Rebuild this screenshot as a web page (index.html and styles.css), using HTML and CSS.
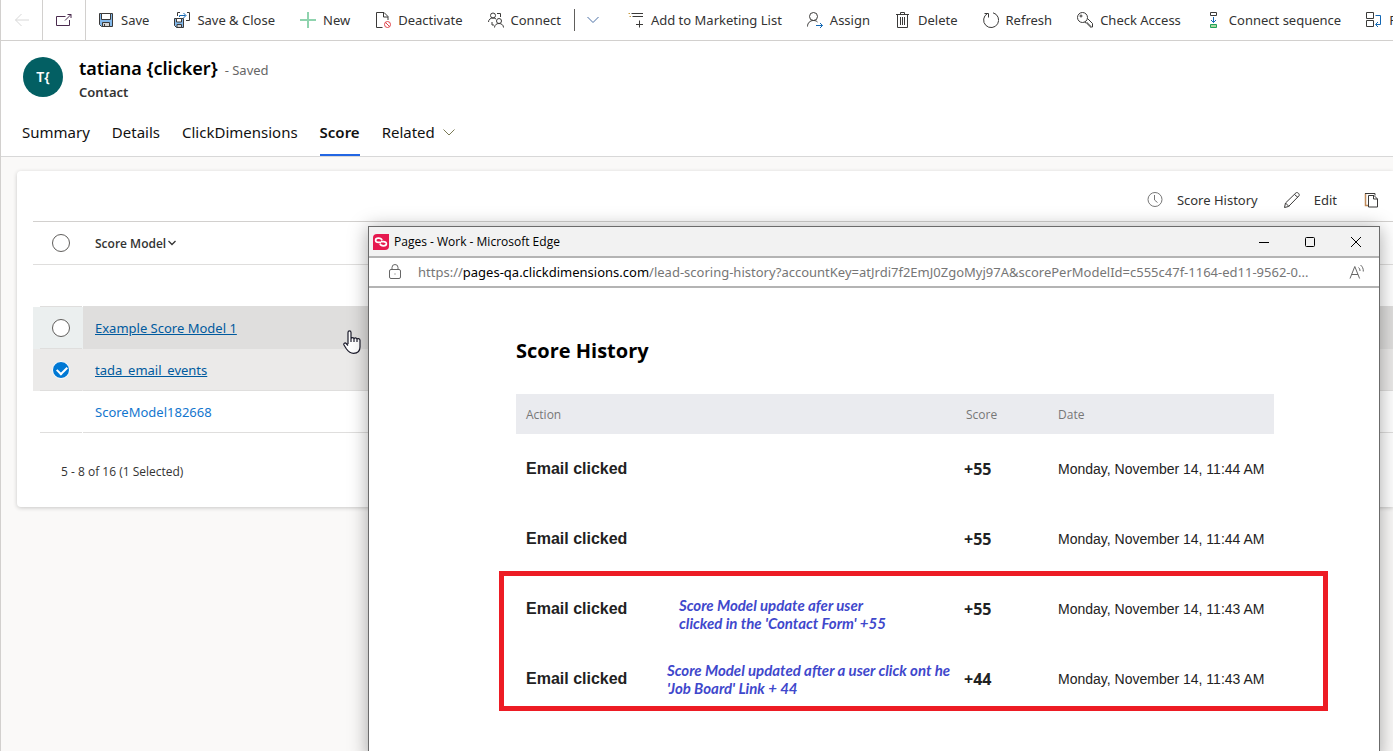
FILE: index.html
```
<!DOCTYPE html>
<html lang="en">
<head>
  <meta charset="UTF-8" />
  <meta name="viewport" content="width=device-width, initial-scale=1.0" />
  <title>Contact: tatiana {clicker}</title>
  <link rel="stylesheet" href="styles.css">
</head>
<body>
  <div class="page">
    <nav class="commands">
      <button class="cmd-square" aria-label="Back">
        <svg class="icon faded" viewBox="0 0 16 16"><path d="M15 8H1.500M7.500 2L1.500 8l6 6"/></svg>
      </button>
      <button class="cmd-square" aria-label="Open in new window">
        <svg class="icon popout" viewBox="0 0 16 16"><path d="M9.500 4.500H.5v9h13V8M9 8.500l6-6M11.500 2.500H15V6"/></svg>
      </button>
      <button class="cmd">
        <svg class="icon" viewBox="0 0 16 16"><path fill="#83b9eb" d="M1.500 1.500h13v13h-11l-2-2z"/><path fill="#fff" d="M3.500 1.500h9v6h-9z"/><path fill="#d5d5d5" d="M4.500 10.500h7v4h-7z"/><path d="M6.500 12v2.500"/></svg>
        Save
      </button>
      <button class="cmd">
        <svg class="icon" viewBox="0 0 16 16"><path fill="#83b9eb" d="M.5 6.500h9v9h-7l-2-2z"/><path fill="#fff" d="M2.500 6.500h5v3.500h-5z"/><path fill="#d5d5d5" d="M3 12.500h4.500v3H3z"/><path d="M3.500 4V.5H6M13 .5h2.500v8H12"/><path stroke="#1267b4" d="M5.500 5V3.500h6M9.500 1l2.500 2.500L9.500 6"/></svg>
        Save &amp; Close
      </button>
      <button class="cmd">
        <svg class="icon" viewBox="0 0 16 16"><path stroke="#8fd3ae" stroke-width="2" d="M8 0v16M0 8h16"/></svg>
        New
      </button>
      <button class="cmd">
        <svg class="icon" viewBox="0 0 16 16"><path d="M7.500 15.500h-6V.5H9l4 4V8M8.500.5v4.500H13"/><g stroke="#e0434b"><circle cx="12.500" cy="12.500" r="3"/><path d="M10.500 10.500l4 4"/></g></svg>
        Deactivate
      </button>
      <button class="cmd">
        <svg class="icon" viewBox="0 0 16 16"><circle cx="5" cy="3.500" r="2.500"/><path d="M.5 10c0-2.500 2-4 4.500-4 1.500 0 2.500.5 3 1M9 1.500h3.500V5"/><circle cx="11" cy="9" r="2.500"/><path d="M6.500 15.500c0-2.500 2-4 4.500-4s4.500 1.500 4.500 4M4 10v3h2"/></svg>
        Connect
      </button>
      <button class="cmd-more" aria-label="More connect options">
        <svg class="icon chevron" viewBox="0 0 16 16"><path d="M2.500 5l5.500 5.500L13.500 5"/></svg>
      </button>
      <button class="cmd">
        <svg class="icon" viewBox="0 0 16 16"><path d="M3.500 1.500H15M4.500 4.500H15M11.500 8.500v7M8 12.500h7"/><path stroke="#c69a3c" d="M.5 1.500H2M1.500 4.500H3"/></svg>
        Add to Marketing List
      </button>
      <button class="cmd">
        <svg class="icon" viewBox="0 0 16 16"><circle cx="6.500" cy="4.500" r="4"/><path d="M.5 14.500c0-3.500 2.500-6 6-6 2 0 3 .5 4 1.500"/><path stroke="#1267b4" d="M9 13.500h6.500M13 11l2.500 2.500L13 16"/></svg>
        Assign
      </button>
      <button class="cmd">
        <svg class="icon" viewBox="0 0 16 16"><path d="M1 2.500h13M5.500 2.500v-2h4v2M2.500 2.500v13h10v-13M5.500 5v8M7.500 5v8M9.500 5v8"/></svg>
        Delete
      </button>
      <button class="cmd">
        <svg class="icon" viewBox="0 0 16 16"><path d="M10 .8A7.500 7.500 0 1 1 4.500 1.500M1.500 1.500h4v4"/></svg>
        Refresh
      </button>
      <button class="cmd">
        <svg class="icon" viewBox="0 0 16 16"><circle cx="5.500" cy="5.500" r="5"/><circle cx="4" cy="4" r="1"/><path d="M10.500 6.500l5 5v3.500H13v-2h-2v-2H9L7.500 10"/></svg>
        Check Access
      </button>
      <button class="cmd">
        <svg class="icon" viewBox="0 0 16 16"><path d="M4.500.5h6v3h-6z"/><path stroke="#1267b4" d="M7.500 5v5.500M5 8l2.500 2.500L10 8"/><path fill="#a5d8a0" stroke="#1fa35a" d="M4.500 12.500h6v3h-6z"/></svg>
        Connect sequence
      </button>
      <button class="cmd">
        <svg class="icon" viewBox="0 0 16 16"><path d="M.5.5h7v6h-7zM.5 8.500h7v6h-7z"/><path stroke="#1267b4" d="M9.500 3.500h5v9H10M12 10l-2.500 2.500L12 15"/></svg>
        P
      </button>
    </nav>

    <header class="record">
      <div class="identity">
        <div class="avatar">T{</div>
        <div>
          <div class="name-line">
            <h1>tatiana {clicker}</h1>
            <span class="saved">- Saved</span>
          </div>
          <div class="entity">Contact</div>
        </div>
      </div>
      <div class="tabs">
        <button class="tab">Summary</button>
        <button class="tab">Details</button>
        <button class="tab">ClickDimensions</button>
        <button class="tab active">Score</button>
        <button class="tab">Related
          <svg class="icon related" viewBox="0 0 16 16"><path d="M2.500 5.500L8 11l5.500-5.500"/></svg>
        </button>
      </div>
    </header>

    <main class="panel">
      <div class="toolbar">
        <button class="tool">
          <svg class="icon grey" viewBox="0 0 16 16"><circle cx="8" cy="7.500" r="7"/><path d="M7.500 3v5l3 2.500"/></svg>
          Score History
        </button>
        <button class="tool">
          <svg class="icon" viewBox="0 0 16 16"><path d="M.5 15.500l1-4.500L12 .8c1.500-1 4 1.200 3 3L4.500 14.500zM1.500 11l3.500 3.500M10.500 2.500l3.500 3"/></svg>
          Edit
        </button>
        <button class="tool" aria-label="Copy">
          <svg class="icon" viewBox="0 0 16 16"><path stroke="#c08a5a" stroke-width="1.500" d="M5 13.500H2.500v-12"/><path d="M2 1.500h10v2M5.500 3.500H11l3.500 3.500v8h-9zM10.500 3.500V7h4"/></svg>
        </button>
      </div>

      <table class="models">
        <thead>
          <tr>
            <th class="pick"><input type="checkbox" aria-label="Select all"></th>
            <th>Score Model
              <svg class="sort" viewBox="0 0 10 10"><path d="M1.500 3L5 6.500 8.500 3"/></svg>
            </th>
          </tr>
        </thead>
        <tbody>
          <tr><td class="pick"></td><td></td></tr>
          <tr class="hovered">
            <td class="pick"><input type="checkbox" aria-label="Select Example Score Model 1"></td>
            <td><a href="#">Example Score Model 1</a></td>
          </tr>
          <tr class="selected">
            <td class="pick"><input type="checkbox" aria-label="Select tada_email_events" checked></td>
            <td><a href="#">tada_email_events</a></td>
          </tr>
          <tr>
            <td class="pick"></td>
            <td><a href="#">ScoreModel182668</a></td>
          </tr>
        </tbody>
      </table>
      <div class="paging">5 - 8 of 16 (1 Selected)</div>
    </main>
  </div>

  <svg class="pointer" viewBox="0 0 18 24"><path d="M5 14V2.500C5 1.300 5.700.8 6.500.8S8 1.300 8 2.500V9c0-1.800 3-1.800 3 0 0-1.500 3-1.500 3 .5 0-1.300 3-1.200 3 .8V17c0 4-2.500 6.300-6.500 6.300-3.500 0-5-1.500-7-4.300L1 15c-.8-1.500 1-2.700 2.200-1.500L5 15.500M8 8.500V12M11 9v3M14 9.500V12"/></svg>

  <section class="window">
    <div class="titlebar">
      <svg class="logo" viewBox="0 0 16 16"><path fill="#e6194f" d="M4 0h12v12a4 4 0 0 1-4 4H0V4a4 4 0 0 1 4-4z"/><path fill="none" stroke="#fff" stroke-width="1.700" d="M9 6.200C8.500 4.700 7 4.200 5.500 4.200c-1.700 0-2.900.8-2.900 2S3.800 8.300 5.500 8.300H8M7 9.800c.5 1.500 2 2 3.500 2 1.700 0 2.900-.8 2.900-2s-1.200-2.100-2.900-2.100H8"/></svg>
      <span class="window-title">Pages - Work - Microsoft Edge</span>
      <button class="control" aria-label="Minimize"><svg viewBox="0 0 12 12"><path d="M1 6.500h10"/></svg></button>
      <button class="control" aria-label="Maximize"><svg viewBox="0 0 12 12"><rect x="1.500" y="1.500" width="9" height="9" rx="1"/></svg></button>
      <button class="control" aria-label="Close"><svg viewBox="0 0 12 12"><path d="M1 1l10 10M11 1L1 11"/></svg></button>
    </div>
    <div class="address">
      <svg class="icon lock" viewBox="0 0 16 16"><rect x="2.500" y="5.500" width="11" height="9" rx="1.500"/><path d="M5 5.500V3.500a3 3 0 0 1 6 0v2M7.500 10h1"/></svg>
      <span class="url">https://<b>pages-qa.clickdimensions.com</b>/lead-scoring-history?accountKey=atJrdi7f2EmJ0ZgoMyj97A&amp;scorePerModelId=c555c47f-1164-ed11-9562-0...</span>
      <svg class="icon lock" viewBox="0 0 16 16"><path d="M1 14.500L5.800 2.500l4.800 12M2.500 10.500h6.500M9.500 3.500c1 .8 1.500 2 1.500 3.500M11.500 1c1.800 1.500 3 3.500 2.800 6.500"/></svg>
    </div>
    <div class="history">
      <h2>Score History</h2>
      <table class="scores">
        <thead>
          <tr><th class="action">Action</th><th class="score">Score</th><th>Date</th></tr>
        </thead>
        <tbody>
          <tr><td class="action">Email clicked</td><td class="score">+55</td><td>Monday, November 14, 11:44 AM</td></tr>
          <tr><td class="action">Email clicked</td><td class="score">+55</td><td>Monday, November 14, 11:44 AM</td></tr>
          <tr><td class="action">Email clicked</td><td class="score">+55</td><td>Monday, November 14, 11:43 AM</td></tr>
          <tr><td class="action">Email clicked</td><td class="score">+44</td><td>Monday, November 14, 11:43 AM</td></tr>
        </tbody>
      </table>
      <div class="callout">
        <p class="note note-form">Score Model update afer user<br>clicked in the 'Contact Form' +55</p>
        <p class="note note-board">Score Model updated after a user click ont he<br>'Job Board' Link + 44</p>
      </div>
    </div>
  </section>
</body>
</html>
```
FILE: styles.css
```
* {
  box-sizing: border-box;
}
body {
  margin: 0;
  height: 100vh;
  overflow: hidden;
  position: relative;
  font-family: "Noto Sans", sans-serif;
  font-size: 13px;
  color: #333;
  background: #faf9f8;
}
button {
  border: none;
  background: none;
  padding: 0;
  font: inherit;
  color: inherit;
  cursor: pointer;
}
.page {
  min-height: 100vh;
  border-left: 1px solid #d2d0ce;
}
.icon {
  width: 16px;
  height: 16px;
  flex: none;
  fill: none;
  stroke: #3b3a39;
}

/* command bar */
.commands {
  display: flex;
  height: 41px;
  overflow: hidden;
  background: #fff;
  border-bottom: 1px solid #d2d0ce;
}
.cmd-square {
  display: flex;
  align-items: center;
  justify-content: center;
  flex: none;
  width: 42px;
  border-right: 1px solid #d2d0ce;
}
.cmd-square + .cmd-square {
  width: 43px;
}
.cmd {
  display: flex;
  align-items: center;
  gap: 7px;
  flex: none;
  padding: 0 13px 0 12px;
  white-space: nowrap;
}
.cmd-more {
  display: flex;
  align-items: center;
  flex: none;
  margin: 9px 5px 9px 0;
  padding: 0 10px;
  border-left: 1px solid #605e5c;
}
.faded {
  stroke: #d8d8d8;
}
.popout {
  stroke: #4a2b4e;
}
.chevron {
  stroke: #4a6fa5;
}

/* record header */
.record {
  background: #fff;
  padding: 16px 21px 0;
  border-bottom: 1px solid #d8d8d8;
}
.identity {
  display: flex;
  gap: 16px;
  padding-left: 1px;
}
.avatar {
  width: 40px;
  height: 40px;
  border-radius: 50%;
  background: #035f63;
  color: #fff;
  font-size: 14px;
  font-weight: 600;
  line-height: 40px;
  text-align: center;
}
.name-line {
  display: flex;
  align-items: baseline;
  gap: 7px;
  height: 22px;
  line-height: 22px;
}
h1 {
  margin: 0;
  font-size: 18px;
  font-weight: 600;
  color: #000;
}
.saved {
  color: #666;
}
.entity {
  line-height: 26px;
  font-weight: 600;
}
.tabs {
  display: flex;
  gap: 22px;
}
.tab {
  display: flex;
  align-items: center;
  gap: 6px;
  padding: 16px 0 11px;
  border-bottom: 2px solid transparent;
  font-size: 15px;
  line-height: 22px;
  color: #111;
}
.tab.active {
  font-weight: 600;
  border-color: #2266e3;
}
.related {
  stroke: #7a7a55;
}

/* score models */
.panel {
  margin: 14px 0 0 16px;
  background: #fff;
  border-radius: 4px 0 0 4px;
  box-shadow: 0 1px 4px rgba(0, 0, 0, 0.2);
}
.toolbar {
  display: flex;
  justify-content: flex-end;
  gap: 26px;
  height: 50px;
  padding: 8px 14px 0 0;
}
.tool {
  display: flex;
  align-items: center;
  gap: 14px;
}
.grey {
  stroke: #777;
}
.models {
  width: calc(100% - 16px);
  margin-left: 16px;
  border-spacing: 0;
  border-top: 1px solid #d2d0ce;
}
.models th,
.models td {
  height: 42px;
  padding: 0 12px;
  text-align: left;
  border-bottom: 1px solid #dfdedd;
}
.models th {
  height: 43px;
  font-family: "Open Sans", sans-serif;
  font-size: 12px;
  font-weight: 600;
}
.models .pick {
  position: relative;
  width: 50px;
  padding: 0 0 0 19px;
}
.models td.pick {
  border-bottom: none;
}
td.pick::after {
  content: "";
  position: absolute;
  left: 7px;
  right: 1px;
  bottom: 0;
  height: 1px;
  background: #dfdedd;
}
.models input {
  appearance: none;
  display: block;
  width: 18px;
  height: 18px;
  margin: 0;
  border: 1px solid #605e5c;
  border-radius: 50%;
  background: #fff;
}
.models input:checked {
  position: relative;
  border: 1px solid #fff;
  background: #0078d4;
}
.models input:checked::after {
  content: "";
  position: absolute;
  left: 4px;
  top: 4px;
  width: 8px;
  height: 5px;
  border-left: 2px solid #fff;
  border-bottom: 2px solid #fff;
  transform: rotate(-45deg);
}
.models a {
  color: #1376ce;
  text-decoration: none;
}
.hovered td {
  background: #dfdedd;
}
.hovered td.pick {
  background: #ebefef;
}
.selected td {
  background: #ebeae9;
}
.hovered a,
.selected a {
  color: #005a9e;
  text-decoration: underline;
}
.models .sort {
  width: 10px;
  height: 10px;
  margin-left: -2px;
  fill: none;
  stroke: #333;
  stroke-width: 1.3;
}
.paging {
  padding: 30px 44px 26px;
  font-family: "Open Sans", sans-serif;
  font-size: 12px;
  line-height: 18px;
}
.pointer {
  position: absolute;
  left: 343px;
  top: 330px;
  width: 18px;
  height: 24px;
  fill: #fff;
  stroke: #1b1b2b;
  stroke-width: 1.2;
}

/* browser window over the record */
.window {
  position: absolute;
  left: 368px;
  right: 13px;
  top: 226px;
  bottom: -8px;
  background: #fff;
  border: 1px solid #6b6b6b;
  box-shadow: 0 2px 18px rgba(0, 0, 0, 0.35);
}
.titlebar {
  display: flex;
  align-items: center;
  height: 31px;
  padding-left: 4px;
  background: #f2f2f2;
  border-bottom: 2px solid #b4b4b4;
  font-family: "Open Sans", sans-serif;
  font-size: 12px;
  color: #000;
}
.logo {
  width: 16px;
  height: 16px;
}
.window-title {
  flex: 1;
  padding-left: 5px;
}
.control {
  width: 46px;
  height: 29px;
}
.control svg {
  display: block;
  width: 12px;
  height: 12px;
  margin: 0 auto;
  fill: none;
  stroke: #000;
}
.address {
  display: flex;
  align-items: center;
  gap: 15px;
  height: 30px;
  padding: 0 14px 0 18px;
  border-bottom: 2px solid #b4b4b4;
  color: #767676;
}
.lock {
  stroke: #666;
}
.url {
  flex: 1;
  overflow: hidden;
  white-space: nowrap;
}
.url b {
  font-weight: 400;
  color: #000;
}
.history {
  position: relative;
  padding: 48px 105px 0 147px;
  font-family: "Open Sans", sans-serif;
}
h2 {
  margin: 0 0 28px;
  font-size: 20px;
  line-height: 30px;
  font-weight: 700;
  color: #000;
}
.scores {
  width: 100%;
  border-spacing: 0;
  text-align: left;
  color: #222;
}
.scores th {
  height: 40px;
  padding: 0;
  background: #eaebef;
  font-size: 12px;
  font-weight: 400;
  color: #777;
}
.scores td {
  height: 70px;
  padding: 0;
  font-family: "Liberation Sans", Arial, sans-serif;
  font-size: 14px;
}
.scores .action {
  width: 448px;
  padding-left: 10px;
}
.scores .score {
  width: 94px;
}
.scores th.score {
  padding-left: 2px;
}
.scores td.action {
  font-size: 16px;
  font-weight: 700;
}
.scores td.score {
  font-family: "Open Sans", sans-serif;
  font-size: 16px;
  font-weight: 700;
}
.callout {
  position: absolute;
  left: 130px;
  right: 51px;
  top: 283px;
  height: 140px;
  border: 5px solid #ed1c24;
}
.note {
  position: absolute;
  margin: 0;
  font-family: Lato, sans-serif;
  font-size: 15px;
  font-style: italic;
  font-weight: 700;
  line-height: 18px;
  white-space: nowrap;
  color: #3f48cc;
}
.note-form {
  left: 175px;
  top: 20px;
}
.note-board {
  left: 163px;
  top: 85px;
}
```
